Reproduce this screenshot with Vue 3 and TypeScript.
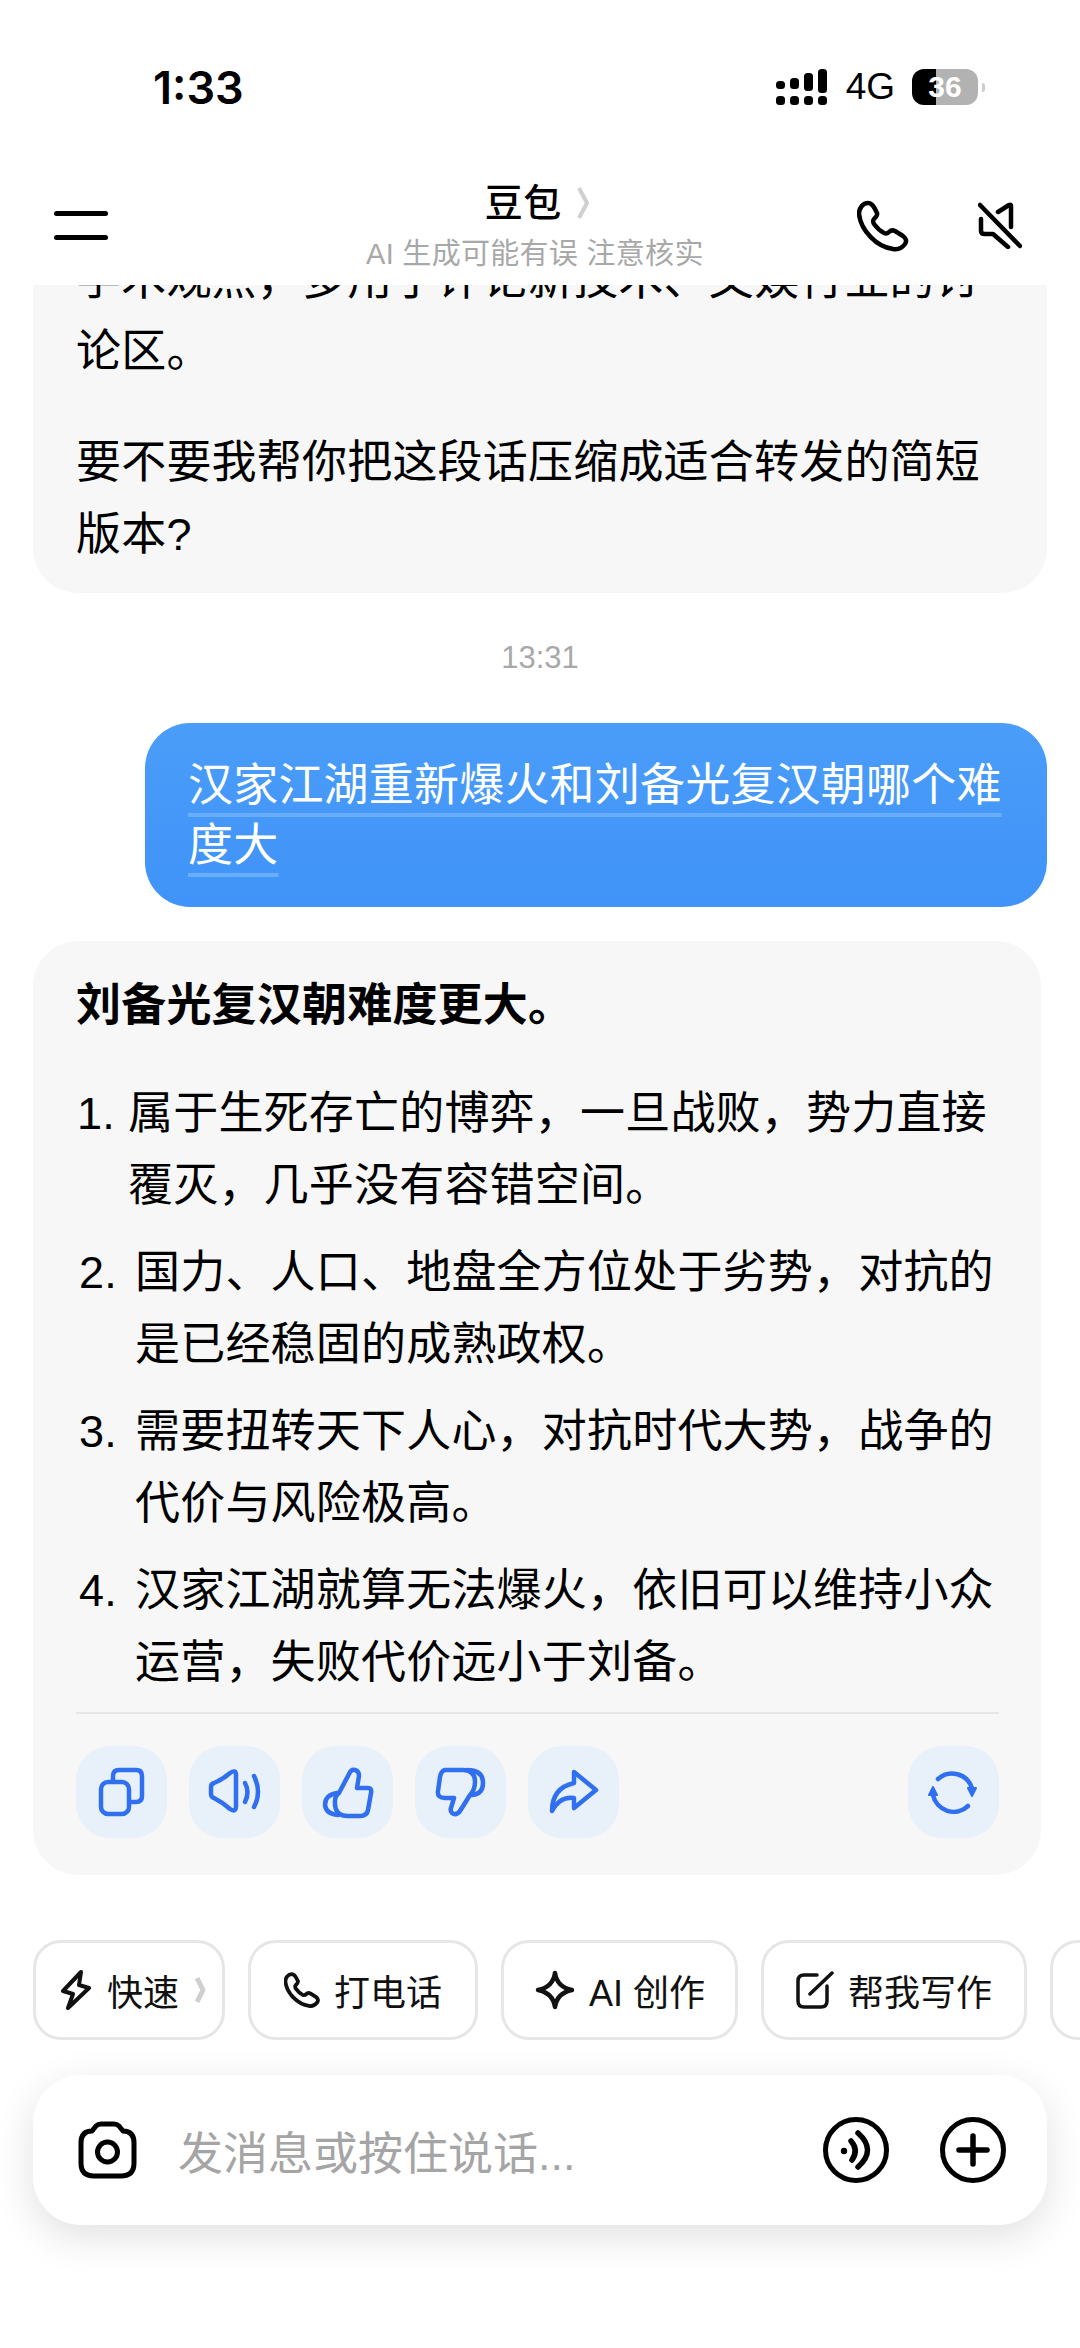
<script setup lang="ts">
interface Step {
  num: string
  text: string
  first?: boolean
}

const steps: Step[] = [
  { num: '1.', text: '属于生死存亡的博弈，一旦战败，势力直接覆灭，几乎没有容错空间。', first: true },
  { num: '2.', text: '国力、人口、地盘全方位处于劣势，对抗的是已经稳固的成熟政权。' },
  { num: '3.', text: '需要扭转天下人心，对抗时代大势，战争的代价与风险极高。' },
  { num: '4.', text: '汉家江湖就算无法爆火，依旧可以维持小众运营，失败代价远小于刘备。' }
]
</script>

<template>
  <div class="phone">
    <div class="status">
      <span class="time">1:33</span>
      <div class="status-right">
        <svg class="signal" width="52" height="36" viewBox="0 0 52 36" fill="#000">
          <rect x="0" y="12" width="9" height="8" rx="3.5" />
          <rect x="0" y="27" width="9" height="9" rx="3.5" />
          <rect x="14" y="9" width="9" height="11" rx="3.5" />
          <rect x="14" y="27" width="9" height="9" rx="3.5" />
          <rect x="28" y="4" width="9" height="18" rx="3.5" />
          <rect x="28" y="27" width="9" height="9" rx="3.5" />
          <rect x="42" y="0" width="9" height="24" rx="3.5" />
          <rect x="42" y="27" width="9" height="9" rx="3.5" />
        </svg>
        <span class="net">4G</span>
        <div class="battery"><span>36</span></div>
        <span class="battery-tip"></span>
      </div>
    </div>

    <header class="nav">
      <div class="menu"><i></i><i></i></div>
      <div class="nav-center">
        <div class="nav-title">
          <span>豆包</span>
          <svg width="12" height="34" viewBox="0 0 12 34" fill="none" stroke="#d0d0d0" stroke-width="4" stroke-linejoin="round">
            <path d="M2 2 L10 17 L2 32" />
          </svg>
        </div>
        <div class="nav-sub">AI 生成可能有误 注意核实</div>
      </div>
      <div class="nav-right">
        <svg width="52" height="52" viewBox="0 0 52 52" fill="none" stroke="#000" stroke-width="4.5" stroke-linejoin="round">
          <path d="M11 3 C14 3 16 5 18 9 L20 13 C21 15 19 17 17 19 C16 20 16 22 17 24 C20 28 23 31 27 33 C29 34 31 33 32 32 C34 30 36 30 38 31 L46 36 C49 38 50 41 48 44 C45 48 41 50 36 49 C20 47 4 31 2 14 C2 8 6 3 11 3Z" />
        </svg>
        <svg width="44" height="47" viewBox="0 0 44 47" fill="none" stroke="#000" stroke-width="4.5" stroke-linecap="round" stroke-linejoin="round">
          <path d="M2 3 L42 44" />
          <path d="M20 10 L31 3 Q33 2 33 4 V25" />
          <path d="M3 17 V29 Q3 32 7 32 H15 L30 45" />
        </svg>
      </div>
    </header>

    <main class="chat">
      <section class="bubble bubble-top">
        <p>学术观点，多用于评论新技术、文娱行业的讨论区。</p>
        <p>要不要我帮你把这段话压缩成适合转发的简短版本?</p>
      </section>

      <div class="stamp">13:31</div>

      <section class="mine">
        <span>汉家江湖重新爆火和刘备光复汉朝哪个难度大</span>
      </section>

      <section class="bubble answer">
        <p class="lead">刘备光复汉朝难度更大。</p>
        <ol class="steps">
          <li v-for="step in steps" :key="step.num" :class="{ first: step.first }">
            <span class="num">{{ step.num }}</span>
            <span>{{ step.text }}</span>
          </li>
        </ol>
        <div class="actions">
          <button>
            <svg viewBox="0 0 91 92">
              <rect x="25" y="36" width="28" height="32" rx="7" />
              <path d="M37 35 V30 Q37 24 43 24 H60 Q66 24 66 30 V50 Q66 56 60 56 H54" />
            </svg>
          </button>
          <button>
            <svg viewBox="0 0 91 92">
              <path d="M22 41 Q22 38 25 37 Q33 34 41 27 Q47 23 47 29 V60 Q47 67 41 63 Q33 56 25 52 Q22 51 22 48Z" />
              <path d="M56 37 Q61 46 56 56" />
              <path d="M65 30 Q73 46 65 61" />
            </svg>
          </button>
          <button>
            <svg viewBox="0 0 91 92">
              <path d="M37 47 L47 28 Q49 23 53 24 Q57 25 57 30 L55 42 H66 Q70 42 69 47 L66 64 Q65 70 58 70 H46 Q32 70 33 55 Q33 50 37 47Z" />
              <path d="M35 47 Q23 49 23 59 Q24 68 36 69" />
            </svg>
          </button>
          <button>
            <svg viewBox="0 0 91 92">
              <path d="M30 24 H48 Q60 24 60 36 Q60 44 55 49 L45 65 Q41 70 37 67 Q35 65 36 62 L39 52 H30 Q22 52 23 45 L25 31 Q26 25 30 24Z" />
              <path d="M52 24 Q68 24 68 37 Q68 48 57 49" />
            </svg>
          </button>
          <button>
            <svg viewBox="0 0 91 92">
              <path d="M46 26 L68 44 L46 62 V52 Q32 50 24 65 Q24 42 46 37Z" />
            </svg>
          </button>
          <button class="refresh">
            <svg viewBox="0 0 91 92">
              <path d="M30 33 A 21 21 0 0 1 64 42" />
              <path d="M60 60 A 21 21 0 0 1 25 49" />
              <path class="solid" d="M60 42 H68 L64 50Z" />
              <path class="solid" d="M21 49 H29 L25 41Z" />
            </svg>
          </button>
        </div>
      </section>
    </main>

    <div class="chips">
      <div class="chip chip-fast">
        <svg width="30" height="40" viewBox="0 0 30 40" fill="none" stroke="#111" stroke-width="4" stroke-linejoin="round">
          <path d="M20 2 L2 21 L12 24 L7 38 L28 18 L18 15Z" />
        </svg>
        <span>快速</span>
        <svg width="11" height="28" viewBox="0 0 11 28" fill="none" stroke="#d0d0d0" stroke-width="5" stroke-linejoin="round">
          <path d="M2 2 L8 14 L2 26" />
        </svg>
      </div>
      <div class="chip chip-call">
        <svg width="36" height="38" viewBox="0 0 52 52" fill="none" stroke="#111" stroke-width="5.5" stroke-linejoin="round">
          <path d="M11 3 C14 3 16 5 18 9 L20 13 C21 15 19 17 17 19 C16 20 16 22 17 24 C20 28 23 31 27 33 C29 34 31 33 32 32 C34 30 36 30 38 31 L46 36 C49 38 50 41 48 44 C45 48 41 50 36 49 C20 47 4 31 2 14 C2 8 6 3 11 3Z" />
        </svg>
        <span>打电话</span>
      </div>
      <div class="chip chip-ai">
        <svg width="40" height="40" viewBox="0 0 40 40" fill="none" stroke="#111" stroke-width="4.5" stroke-linejoin="round">
          <path d="M20 3 Q22 17 37 20 Q22 23 20 37 Q18 23 3 20 Q18 17 20 3Z" />
        </svg>
        <span>AI 创作</span>
      </div>
      <div class="chip chip-write">
        <svg width="38" height="38" viewBox="0 0 38 38" fill="none" stroke="#111" stroke-width="3.5" stroke-linecap="round">
          <path d="M21 4 H8 Q2 4 2 10 V30 Q2 36 8 36 H25 Q31 36 31 30 V15" />
          <path d="M14 23 L36 2" />
        </svg>
        <span>帮我写作</span>
      </div>
      <div class="chip chip-more"></div>
    </div>

    <div class="input">
      <svg class="camera" width="63" height="59" viewBox="0 0 63 59" fill="none" stroke="#000" stroke-width="5" stroke-linejoin="round">
        <path d="M5 22 Q5 10 16 10 L20 5 Q22 3 25 3 H38 Q41 3 43 5 L47 10 Q58 10 58 22 V42 Q58 55 45 55 H18 Q5 55 5 42Z" />
        <circle cx="31.5" cy="31" r="10" />
      </svg>
      <span class="placeholder">发消息或按住说话...</span>
      <svg class="round-btn" width="66" height="66" viewBox="0 0 66 66" fill="none" stroke="#000" stroke-width="5" stroke-linecap="round">
        <circle cx="33" cy="33" r="30.5" />
        <circle cx="21" cy="34" r="3.2" fill="#000" stroke="none" />
        <path d="M28 24 Q36 33 29 43" stroke-width="5.5" />
        <path d="M35 16 Q54 33 35 50" stroke-width="5.5" />
      </svg>
      <svg class="round-btn plus" width="66" height="66" viewBox="0 0 66 66" fill="none" stroke="#000" stroke-width="5" stroke-linecap="round">
        <circle cx="33" cy="33" r="30.5" />
        <path d="M19 33 H47 M33 19 V47" stroke-width="5.5" />
      </svg>
    </div>
  </div>
</template>

<style scoped>
.phone {
  width: 1080px;
  height: 2348px;
  overflow: hidden;
  background: #fff;
  color: #000;
  font-family: "Liberation Sans", "Noto Sans CJK SC", sans-serif;
  display: flex;
  flex-direction: column;
}
.status {
  height: 175px;
  box-sizing: border-box;
  padding: 0 95px 0 153px;
  display: flex;
  justify-content: space-between;
  align-items: flex-start;
}
.time {
  margin-top: 62px;
  font-family: Inter, "Liberation Sans", sans-serif;
  font-size: 45px;
  line-height: 52px;
  font-weight: 600;
}
.status-right {
  margin-top: 69px;
  display: flex;
  align-items: center;
  height: 36px;
}
.net {
  margin-left: 18px;
  font-size: 37px;
  line-height: 36px;
}
.battery {
  margin-left: 17px;
  width: 66px;
  height: 36px;
  border-radius: 12px;
  background: linear-gradient(to right, #000 24px, #b2b2b2 24px);
  color: #fff;
  font-size: 30px;
  font-weight: 700;
  line-height: 36px;
  text-align: center;
}
.battery-tip {
  margin-left: 4px;
  width: 3px;
  height: 9px;
  border-radius: 0 3px 3px 0;
  background: #ccc;
}
.nav {
  height: 110px;
  box-sizing: border-box;
  padding: 0 58px 9px 54px;
  display: grid;
  grid-template-columns: 312px auto 1fr;
  align-items: center;
}
.menu {
  display: flex;
  flex-direction: column;
  gap: 19px;
  width: 54px;
}
.menu i {
  display: block;
  height: 5px;
  border-radius: 3px;
  background: #000;
}
.nav-center {
  display: flex;
  flex-direction: column;
  align-items: center;
  gap: 9px;
}
.nav-title {
  height: 48px;
  margin-left: 4px;
  display: flex;
  align-items: center;
  gap: 15px;
  font-size: 38px;
  font-weight: 500;
  line-height: 48px;
  letter-spacing: 0.5px;
}
.nav-sub {
  color: #a8a8a8;
  font-size: 29px;
  line-height: 36px;
  letter-spacing: 0.3px;
  white-space: nowrap;
}
.nav-right {
  display: flex;
  justify-content: flex-end;
  align-items: center;
  gap: 69px;
}
.chat {
  height: 1590px;
  overflow: hidden;
  display: flex;
  flex-direction: column;
  align-items: flex-start;
}
.bubble {
  margin-left: 33px;
  background: #f7f7f8;
  box-sizing: border-box;
  font-size: 45px;
  line-height: 72px;
  letter-spacing: 0.2px;
}
.bubble p {
  margin: 0;
}
.bubble-top {
  width: 1014px;
  margin-top: -41px;
  padding: 0 43px 22px;
  border-radius: 0 0 45px 45px;
}
.bubble-top p + p {
  margin-top: 39px;
}
.stamp {
  align-self: center;
  height: 130px;
  line-height: 130px;
  color: #a8a8a8;
  font-size: 31px;
}
.mine {
  align-self: flex-end;
  margin-right: 33px;
  width: 902px;
  box-sizing: border-box;
  padding: 33px 43px 31px;
  border-radius: 45px;
  background: linear-gradient(#4a9df8, #4093f8);
  color: #fff;
  font-size: 45px;
  line-height: 60px;
  letter-spacing: 0.2px;
}
.mine span {
  text-decoration: underline;
  text-decoration-color: #68aefb;
  text-decoration-thickness: 4px;
  text-underline-offset: 12px;
  text-decoration-skip-ink: none;
}
.answer {
  margin-top: 34px;
  width: 1008px;
  height: 934px;
  padding: 29px 42px 0 43px;
  border-radius: 45px;
}
.lead {
  font-weight: 700;
}
.steps {
  list-style: none;
  margin: 36px 0 0;
  padding: 0;
  display: flex;
  flex-direction: column;
  gap: 15px;
}
.steps li {
  display: flex;
  padding-left: 3px;
}
.steps li.first {
  padding-left: 1px;
}
.num {
  flex: 0 0 56px;
}
.first .num {
  flex-basis: 51px;
}
.actions {
  margin-top: 13px;
  padding-top: 32px;
  border-top: 2px solid #e6e6e6;
  display: flex;
  gap: 22px;
}
.actions button {
  width: 91px;
  height: 92px;
  padding: 0;
  border: 0;
  border-radius: 34px;
  background: #e8f0fa;
}
.actions svg {
  display: block;
  width: 91px;
  height: 92px;
  fill: none;
  stroke: #2f6ff0;
  stroke-width: 4.5;
  stroke-linecap: round;
  stroke-linejoin: round;
}
.actions svg .solid {
  fill: #2f6ff0;
  stroke-width: 2;
}
.actions .refresh {
  margin-left: auto;
}
.chips {
  margin-top: 65px;
  padding-left: 33px;
  display: flex;
  gap: 23px;
}
.chip {
  flex: none;
  height: 100px;
  box-sizing: border-box;
  padding: 0 32px;
  border: 3px solid #e6e6e6;
  border-radius: 28px;
  display: flex;
  align-items: center;
  gap: 14px;
  font-size: 36px;
  color: #111;
  white-space: nowrap;
}
.chip-fast {
  padding: 0 16px 0 25px;
  gap: 16px;
}
.chip-call {
  padding: 0 33px;
}
.chip-ai {
  padding: 0 30px 0 31px;
}
.chip-write {
  padding: 0 32px;
}
.chip-more {
  width: 100px;
}
.input {
  margin: 35px 33px 0;
  height: 150px;
  box-sizing: border-box;
  padding: 0 41px 0 43px;
  border-radius: 48px;
  background: #fff;
  box-shadow: 0 12px 40px rgba(0, 0, 0, 0.12);
  display: flex;
  align-items: center;
}
.placeholder {
  margin-left: 39px;
  flex: 1;
  color: #a5a5a5;
  font-size: 45px;
}
.plus {
  margin-left: 51px;
}
</style>

<style>
html,
body {
  margin: 0;
  background: #fff;
}
</style>
